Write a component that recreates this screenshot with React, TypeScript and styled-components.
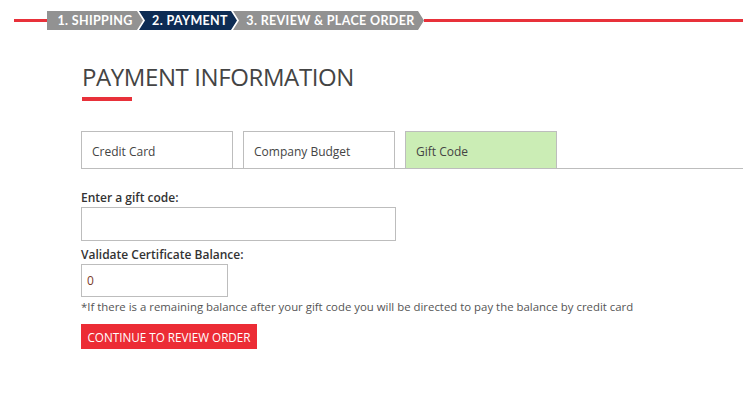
import styled, { createGlobalStyle } from "styled-components";

const GlobalStyle = createGlobalStyle`
  html, body {
    margin: 0;
    padding: 0;
    background: #ffffff;
  }
  body {
    font-family: "Open Sans", "Noto Sans", Arial, sans-serif;
    color: #333333;
  }
`;

const steps = [
  { label: "1. SHIPPING", width: 96, active: false },
  { label: "2. PAYMENT", width: 98, active: true },
  { label: "3. REVIEW & PLACE ORDER", width: 191, active: false },
];

const App = () => {
  return (
    <Page>
      <GlobalStyle />
      <ProgressRow>
        <RedLine style={{ width: 33 }} />
        <Steps>
          {steps.map((s, i) => (
            <Step key={s.label} $active={s.active} $first={i === 0} style={{ width: s.width }}>
              {s.label}
            </Step>
          ))}
        </Steps>
        <RedLine $grow />
      </ProgressRow>

      <Content>
        <Title>PAYMENT INFORMATION</Title>
        <TitleBar />

        <Tabs>
          <Tab>Credit Card</Tab>
          <Tab>Company Budget</Tab>
          <Tab $active>Gift Code</Tab>
        </Tabs>

        <Label $top={21}>Enter a gift code:</Label>
        <Input $width={315} $height={34} />

        <Label $top={6}>Validate Certificate Balance:</Label>
        <Input $width={147} $height={33} $valueColor="#7b3b2a" defaultValue="0" />

        <Note>
          *If there is a remaining balance after your gift code you will be
          directed to pay the balance by credit card
        </Note>

        <Button>CONTINUE TO REVIEW ORDER</Button>
      </Content>
    </Page>
  );
};

const Page = styled.div`
  width: 743px;
  min-height: 395px;
  background: #ffffff;
`;

const ProgressRow = styled.div`
  display: flex;
  align-items: center;
  padding: 11px 0 0 14px;
`;

const RedLine = styled.div<{ $grow?: boolean }>`
  height: 3px;
  background: #e8313a;
  flex: ${(p) => (p.$grow ? "1" : "none")};
`;

const Steps = styled.div`
  display: flex;
  height: 19px;
`;

const Step = styled.div<{ $active: boolean; $first: boolean }>`
  display: flex;
  align-items: center;
  justify-content: center;
  height: 19px;
  margin-left: ${(p) => (p.$first ? "0" : "-4px")};
  padding-left: ${(p) => (p.$first ? "0" : "4px")};
  box-sizing: border-box;
  background: ${(p) => (p.$active ? "#0d2c54" : "#929292")};
  color: #ffffff;
  font-family: Lato, "Open Sans", sans-serif;
  font-weight: 700;
  font-size: 12.5px;
  letter-spacing: 0.35px;
  white-space: nowrap;
  clip-path: ${(p) =>
    p.$first
      ? "polygon(0 0, calc(100% - 6px) 0, 100% 50%, calc(100% - 6px) 100%, 0 100%)"
      : "polygon(0 0, calc(100% - 6px) 0, 100% 50%, calc(100% - 6px) 100%, 0 100%, 6px 50%)"};
`;

const Content = styled.div`
  padding-left: 81px;
`;

const Title = styled.h1`
  margin: 32px 0 0 1px;
  font-family: "Open Sans", sans-serif;
  font-weight: 400;
  font-size: 24px;
  letter-spacing: -0.4px;
  line-height: 30px;
  color: #444444;
`;

const TitleBar = styled.div`
  width: 50px;
  height: 4px;
  margin: 5px 0 0 1px;
  background: #e8313a;
`;

const Tabs = styled.div`
  display: flex;
  gap: 10px;
  margin-top: 30px;
  border-bottom: 1px solid #bdbdbd;
`;

const Tab = styled.div<{ $active?: boolean }>`
  width: 152px;
  height: 37px;
  box-sizing: border-box;
  border: 1px solid #bdbdbd;
  border-bottom: none;
  background: ${(p) => (p.$active ? "#cbedb5" : "#ffffff")};
  padding: 12px 0 0 10px;
  font-size: 12px;
  line-height: 16px;
  color: #444444;
`;

const Label = styled.div<{ $top: number }>`
  margin-top: ${(p) => p.$top}px;
  font-size: 12px;
  font-weight: 600;
  line-height: 16px;
  color: #333333;
`;

const Input = styled.input<{ $width: number; $height: number; $valueColor?: string }>`
  display: block;
  margin-top: 1px;
  width: ${(p) => p.$width}px;
  height: ${(p) => p.$height}px;
  box-sizing: border-box;
  border: 1px solid #bdbdbd;
  padding: 0 5px;
  font-family: "Open Sans", sans-serif;
  font-size: 12px;
  color: ${(p) => p.$valueColor || "#333333"};
  outline: none;
`;

const Note = styled.div`
  margin-top: 2px;
  font-size: 11.4px;
  line-height: 16px;
  color: #555555;
`;

const Button = styled.button`
  display: block;
  margin-top: 9px;
  width: 176px;
  height: 25px;
  border: none;
  background: #ec2c35;
  color: #ffffff;
  font-family: "Open Sans", sans-serif;
  font-size: 11.7px;
  padding: 0;
  cursor: pointer;
`;

export default App;
